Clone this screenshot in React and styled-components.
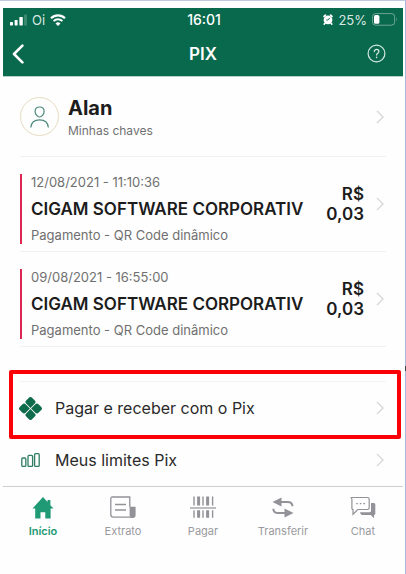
import styled, { createGlobalStyle } from "styled-components";

const transactions = [
  {
    date: "12/08/2021 - 11:10:36",
    name: "CIGAM SOFTWARE CORPORATIV",
    kind: "Pagamento - QR Code dinâmico",
    amount: "0,03",
  },
  {
    date: "09/08/2021 - 16:55:00",
    name: "CIGAM SOFTWARE CORPORATIV",
    kind: "Pagamento - QR Code dinâmico",
    amount: "0,03",
  },
];

const tabs = [
  { label: "Início", icon: <HomeIcon />, active: true },
  { label: "Extrato", icon: <StatementIcon /> },
  { label: "Pagar", icon: <BarcodeIcon /> },
  { label: "Transferir", icon: <TransferIcon /> },
  { label: "Chat", icon: <ChatIcon /> },
];

function Chevron() {
  return (
    <svg width="8" height="14" viewBox="0 0 8 14" fill="none" aria-hidden="true">
      <path d="M1 1l6 6-6 6" stroke="#d8d8da" strokeWidth="1.4" />
    </svg>
  );
}

function SignalIcon() {
  return (
    <svg width="17" height="12" viewBox="0 0 17 12" fill="#fff" aria-hidden="true">
      <rect x="0" y="8" width="3" height="3.4" rx="0.6" />
      <rect x="4.6" y="6" width="3" height="5.4" rx="0.6" />
      <rect x="9.4" y="3" width="3.4" height="8.4" rx="0.6" />
      <rect x="14" y="0.5" width="3" height="11" rx="0.6" opacity="0.2" />
    </svg>
  );
}

function WifiIcon() {
  return (
    <svg width="16" height="12" viewBox="0 0 16 12" fill="none" stroke="#fff" aria-hidden="true">
      <path d="M1 4.3a10 10 0 0 1 14 0" strokeWidth="2.2" />
      <path d="M3.6 7.1a6.3 6.3 0 0 1 8.8 0" strokeWidth="2" />
      <path d="M8 12l-2.5-2.6a3.6 3.6 0 0 1 5 0z" fill="#fff" stroke="none" />
    </svg>
  );
}

function AlarmIcon() {
  return (
    <svg width="10" height="11" viewBox="0 0 10 11" aria-hidden="true">
      <circle cx="5" cy="5.8" r="4.4" fill="#fff" />
      <path
        d="M1 2.4L2.4 1.1M9 2.4L7.6 1.100M2 9.200l-0.800 0.900M8 9.200l0.800 0.900"
        stroke="#fff"
        strokeWidth="1.6"
        strokeLinecap="round"
      />
      <path d="M6.800 3.900L5 6H3.300" stroke="#09694c" strokeWidth="0.9" fill="none" />
    </svg>
  );
}

function BatteryIcon() {
  return (
    <svg width="26" height="13" viewBox="0 0 26 13" fill="none" aria-hidden="true">
      <rect x="0.6" y="0.6" width="22" height="11.6" rx="3" stroke="#fff" strokeOpacity="0.4" />
      <rect x="2" y="2" width="5.4" height="8.8" rx="1.6" fill="#fff" />
      <path d="M24.2 4.6q1.4 1.8 0 3.6z" fill="#fff" fillOpacity="0.5" />
    </svg>
  );
}

function BackIcon() {
  return (
    <svg width="12" height="20" viewBox="0 0 12 20" fill="none" aria-hidden="true">
      <path
        d="M10.4 1.6L2 10l8.4 8.4"
        stroke="#fff"
        strokeWidth="2.6"
        strokeLinecap="round"
        strokeLinejoin="round"
      />
    </svg>
  );
}

function HelpIcon() {
  return (
    <svg width="19" height="19" viewBox="0 0 19 19" fill="none" stroke="#d5e9e1" aria-hidden="true">
      <circle cx="9.5" cy="9.5" r="8.4" strokeWidth="1.2" />
      <path
        d="M7.3 7.6c0-3 4.6-2.8 4.6-.1 0 1.8-2.3 1.8-2.3 3.6"
        strokeWidth="1.2"
        strokeLinecap="round"
      />
      <circle cx="9.6" cy="13.4" r="0.8" fill="#d5e9e1" stroke="none" />
    </svg>
  );
}

function PersonIcon() {
  return (
    <svg width="20" height="22" viewBox="0 0 20 22" fill="none" stroke="#4e8a7c" strokeWidth="1.2" aria-hidden="true">
      <path d="M9.6 1C6.9 1 5.1 2.800 5.100 5.400c0 2.600 2.400 5.600 4.500 5.600s4.500-3 4.500-5.600C14.100 2.800 12.300 1 9.600 1z" />
      <path d="M0.800 21.500c0.500-5.600 4-7.600 8.800-7.600s8.300 2 8.800 7.600" />
    </svg>
  );
}

function PixIcon() {
  return (
    <svg width="23" height="23" viewBox="0 0 23 23" aria-hidden="true">
      <g transform="rotate(45 11.5 11.5)" fill="#0e6b4c">
        <path d="M11.100 11.100H5Q2.800 11.100 2.800 8.900V5Q2.800 2.800 5 2.800H8.900Q11.100 2.800 11.100 5z" />
        <path d="M11.900 11.100V5Q11.900 2.800 14.100 2.800H18Q20.200 2.800 20.200 5V8.900Q20.200 11.100 18 11.100z" />
        <path d="M11.900 11.900H18Q20.200 11.900 20.200 14.100V18Q20.200 20.200 18 20.200H14.100Q11.900 20.200 11.900 18z" />
        <path d="M11.100 11.900V18Q11.100 20.200 8.900 20.200H5Q2.800 20.200 2.800 18V14.100Q2.800 11.900 5 11.900z" />
      </g>
    </svg>
  );
}

function LimitsIcon() {
  return (
    <svg width="19" height="14" viewBox="0 0 19 14" fill="none" stroke="#2f7d62" strokeWidth="1.3" aria-hidden="true">
      <rect x="0.800" y="5" width="4" height="8.400" rx="1" />
      <rect x="7" y="2.400" width="4.600" height="11" rx="1" />
      <rect x="13.600" y="0.700" width="4.600" height="12.700" rx="1" />
    </svg>
  );
}

function HomeIcon() {
  return (
    <svg width="22" height="24" viewBox="0 0 22 24" fill="#1f9a74" aria-hidden="true">
      <path d="M11 1L0.500 12.600h2.700V22.500h5.300v-6.300h4.800v6.300h5.300v-9.900h2.900L18.400 9.200V4h-2.900v2z" />
    </svg>
  );
}

function StatementIcon() {
  return (
    <svg width="26" height="24" viewBox="0 0 26 24" fill="none" stroke="#929298" aria-hidden="true">
      <path
        d="M19.800 11V1H2.200Q0.800 1 0.800 2.400V18.600Q0.800 21.200 3.400 21.200H22.500"
        strokeWidth="1.300"
      />
      <path d="M19.600 10.700h6v8.200q0 3-3 3t-3-3z" fill="#929298" stroke="none" />
      <path d="M5 8.400h11M5 14h11" strokeWidth="1.500" />
    </svg>
  );
}

function BarcodeIcon() {
  return (
    <svg width="26" height="24" viewBox="0 0 26 24" fill="none" stroke="#929298" aria-hidden="true">
      <path d="M0 12h26" strokeWidth="1.200" />
      <path d="M4 0.500v9M4 14.300v7.500M22.600 0.500v9M22.600 14.300v7.500M13 0.500v9M13 14.300v7.500" strokeWidth="1.400" />
      <path d="M8.600 0.500v9M8.600 14.300v7.500M17.600 0.500v9M17.600 14.300v7.500" strokeWidth="3" />
    </svg>
  );
}

function TransferIcon() {
  return (
    <svg width="22" height="24" viewBox="0 0 22 24" fill="none" stroke="#929298" strokeWidth="2" aria-hidden="true">
      <path d="M8 6h7.500q4.800 0 5 4.300" />
      <path d="M1.300 12.800q0.200 4.300 5 4.300H13" />
      <path d="M0.500 6L9.500 1.500v9zM21.500 17.100l-9-4.500v9z" fill="#929298" stroke="none" />
    </svg>
  );
}

function ChatIcon() {
  return (
    <svg width="26" height="24" viewBox="0 0 26 24" fill="none" stroke="#929298" aria-hidden="true">
      <path
        d="M3 1.500h14.500q1.700 0 1.700 1.700v8.600q0 1.700-1.700 1.700H7.800L3 18.200V13.500Q1.900 13.500 1.900 11.800V3.200Q1.700 1.500 0.600 1.500z"
        strokeWidth="1.200"
      />
      <path
        d="M21 7h3q1.300 0 1.300 1.500v9.200q0 1.300-1.300 1.300v3.200L20.800 19H12q-1.700 0-2-2.700h9.500q1.500 0 1.500-1.500z"
        fill="#929298"
        stroke="none"
      />
      <path d="M6.200 7.600h1.600M9.800 7.600h1.600M13.400 7.600h1.600" strokeWidth="1.400" />
    </svg>
  );
}

function App() {
  return (
    <>
      <GlobalStyle />
      <Page>
        <EdgeMark />
        <Header>
          <StatusBar>
            <StatusGroup>
              <SignalIcon />
              <span>Oi</span>
              <WifiIcon />
            </StatusGroup>
            <Clock>16:01</Clock>
            <StatusGroup $end>
              <AlarmIcon />
              <span>25%</span>
              <BatteryIcon />
            </StatusGroup>
          </StatusBar>
          <TitleBar>
            <IconButton aria-label="Voltar">
              <BackIcon />
            </IconButton>
            <Title>PIX</Title>
            <IconButton $end aria-label="Ajuda">
              <HelpIcon />
            </IconButton>
          </TitleBar>
        </Header>

        <Content>
          <Profile href="#">
            <Avatar>
              <PersonIcon />
            </Avatar>
            <Grow>
              <ProfileName>Alan</ProfileName>
              <Small>Minhas chaves</Small>
            </Grow>
            <Chevron />
          </Profile>

          {transactions.map((item) => (
            <Transaction href="#" key={item.date}>
              <Details>
                <Small $large>{item.date}</Small>
                <Company>{item.name}</Company>
                <Small $large>{item.kind}</Small>
              </Details>
              <Amount>R$ {item.amount}</Amount>
              <Chevron />
            </Transaction>
          ))}

          <Menu>
            <MenuItem href="#" $marked>
              <MenuIcon>
                <PixIcon />
              </MenuIcon>
              <Grow>Pagar e receber com o Pix</Grow>
              <Chevron />
            </MenuItem>
            <MenuItem href="#">
              <MenuIcon>
                <LimitsIcon />
              </MenuIcon>
              <Grow>Meus limites Pix</Grow>
              <Chevron />
            </MenuItem>
          </Menu>
        </Content>

        <TabBar>
          {tabs.map((tab) => (
            <Tab key={tab.label} $active={tab.active}>
              {tab.icon}
              {tab.label}
            </Tab>
          ))}
        </TabBar>
      </Page>
    </>
  );
}

const GlobalStyle = createGlobalStyle`
  * {
    box-sizing: border-box;
  }
  body {
    margin: 0;
    background: #fefefe;
    font-family: Inter, "Liberation Sans", sans-serif;
  }
  a {
    color: inherit;
    text-decoration: none;
  }
  button {
    border: 0;
    padding: 0;
    background: none;
    font-family: inherit;
  }
  svg {
    display: block;
    flex-shrink: 0;
  }
`;

const Page = styled.div`
  position: relative;
  min-height: 100vh;
  padding: 7px 2px 0 3px;
  border-top: 1px solid #c0cae2;
  border-right: 1px solid #a9b8dc;
`;

/* short dark notch on the right edge */
const EdgeMark = styled.span`
  position: absolute;
  top: 365px;
  right: -1px;
  width: 1px;
  height: 5px;
  background: #444;
`;

const Header = styled.header`
  background: #09694c;
  color: #fff;
  border-bottom: 1px solid #b5d2c8;
`;

const StatusBar = styled.div`
  display: grid;
  grid-template-columns: 1fr auto 1fr;
  align-items: center;
  height: 23px;
  padding: 0 5px 0 7px;
  font-size: 13px;
`;

const StatusGroup = styled.div`
  display: flex;
  align-items: center;
  gap: 5px;
  justify-content: ${(props) => (props.$end ? "flex-end" : "flex-start")};
  color: #d8e8e2;
`;

const Clock = styled.span`
  font-size: 14px;
  font-weight: 500;
`;

const TitleBar = styled.div`
  display: grid;
  grid-template-columns: 1fr auto 1fr;
  align-items: center;
  height: 45px;
  padding: 0 17px 0 9px;
`;

const IconButton = styled.button`
  justify-self: ${(props) => (props.$end ? "end" : "start")};
`;

const Title = styled.h1`
  margin: 0;
  padding-left: 8px;
  font-size: 17px;
  font-weight: 600;
`;

const Content = styled.main`
  padding: 0 17px;
`;

const Profile = styled.a`
  display: flex;
  align-items: center;
  gap: 9px;
  height: 80px;
  padding-right: 2px;
  border-bottom: 1px solid #f1f1f1;
`;

const Avatar = styled.span`
  display: flex;
  align-items: center;
  justify-content: center;
  width: 39px;
  height: 39px;
  border: 1px solid #e8dcc0;
  border-radius: 50%;
`;

const Grow = styled.span`
  flex: 1;
  min-width: 0;
`;

const ProfileName = styled.strong`
  display: block;
  color: #1c1c1c;
  font-size: 20px;
  font-weight: 700;
  line-height: 27px;
`;

const Small = styled.span`
  display: block;
  color: #707070;
  font-size: ${(props) => (props.$large ? "13px" : "12px")};
  line-height: 17px;
`;

const Transaction = styled.a`
  display: flex;
  align-items: center;
  gap: 12px;
  padding-right: 2px;
  border-bottom: 1px solid #f1f1f1;
`;

const Details = styled.div`
  display: flex;
  flex: 1;
  flex-direction: column;
  gap: 8px;
  margin: 17px 0 7px;
  padding-left: 9px;
  border-left: 2px solid #dc2850;
`;

const Company = styled.strong`
  color: #1c1c1c;
  font-size: 17px;
  font-weight: 600;
  line-height: 20px;
  white-space: nowrap;
`;

const Amount = styled.strong`
  width: 40px;
  color: #1c1c1c;
  font-size: 17px;
  font-weight: 600;
  line-height: 20px;
  text-align: right;
`;

const Menu = styled.nav`
  margin-top: 34px;
  border-top: 1px solid #f3f3f3;
`;

const MenuItem = styled.a`
  position: relative;
  display: flex;
  align-items: center;
  height: 52px;
  padding-right: 2px;
  color: #2a2a2a;
  font-size: 16px;

  &::after {
    content: "";
    display: ${(props) => (props.$marked ? "block" : "none")};
    position: absolute;
    inset: -12px -15px -5px -11px;
    border: 4px solid #fb0007;
    border-radius: 2px;
  }
`;

const MenuIcon = styled.span`
  display: flex;
  justify-content: center;
  width: 21px;
  margin-right: 14px;
`;

const TabBar = styled.nav`
  display: grid;
  grid-template-columns: repeat(5, 1fr);
  padding-top: 9px;
  border-top: 1px solid #cfcfd2;
`;

const Tab = styled.button`
  display: flex;
  flex-direction: column;
  align-items: center;
  gap: 4px;
  color: ${(props) => (props.$active ? "#1f9a74" : "#9a9a9e")};
  font-size: 11px;
  font-weight: ${(props) => (props.$active ? 600 : 400)};
  line-height: 14px;
`;

export default App;
